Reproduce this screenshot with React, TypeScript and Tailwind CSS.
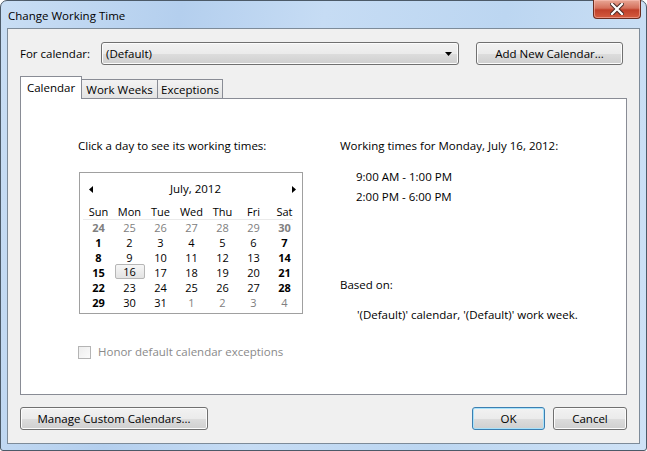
import React from 'react';

const font = { fontFamily: '"Segoe UI", "Open Sans", "Noto Sans", sans-serif' };

type Day = { n: number; muted?: boolean; bold?: boolean; selected?: boolean };

const weeks: Day[][] = [
  [
    { n: 24, muted: true, bold: true },
    { n: 25, muted: true },
    { n: 26, muted: true },
    { n: 27, muted: true },
    { n: 28, muted: true },
    { n: 29, muted: true },
    { n: 30, muted: true, bold: true },
  ],
  [1, 2, 3, 4, 5, 6, 7].map((n, i) => ({ n, bold: i === 0 || i === 6 })),
  [8, 9, 10, 11, 12, 13, 14].map((n, i) => ({ n, bold: i === 0 || i === 6 })),
  [15, 16, 17, 18, 19, 20, 21].map((n, i) => ({ n, bold: i === 0 || i === 6, selected: n === 16 })),
  [22, 23, 24, 25, 26, 27, 28].map((n, i) => ({ n, bold: i === 0 || i === 6 })),
  [
    { n: 29, bold: true },
    { n: 30 },
    { n: 31 },
    { n: 1, muted: true },
    { n: 2, muted: true },
    { n: 3, muted: true },
    { n: 4, muted: true },
  ],
];

const dayNames = ['Sun', 'Mon', 'Tue', 'Wed', 'Thu', 'Fri', 'Sat'];

const WinButton: React.FC<{ label: string; className?: string; isDefault?: boolean }> = ({
  label,
  className = '',
  isDefault,
}) => (
  <button
    className={`h-[23px] rounded-[3px] border text-[11.5px] text-black bg-[linear-gradient(to_bottom,#f2f2f2_0%,#ebebeb_50%,#dddddd_51%,#cfcfcf_100%)] ${
      isDefault ? 'border-[#3c7fb1] shadow-[inset_0_0_0_1px_#a8e2fb]' : 'border-[#707070] shadow-[inset_0_0_0_1px_#fcfcfc]'
    } ${className}`}
  >
    {label}
  </button>
);

const Calendar: React.FC = () => (
  <div className="w-[224px] h-[142px] border border-[#a0a0a0] bg-white pt-[8px] pl-[3px] text-[11px]">
    <div className="relative h-[16px] w-[217px] flex items-center justify-center leading-[16px] text-[11.5px]">
      <svg className="absolute left-[6px] top-[5px]" width="4" height="7" viewBox="0 0 4 7">
        <path d="M4 0 L0 3.5 L4 7 Z" fill="#000" />
      </svg>
      <span className="pl-[8px]">July, 2012</span>
      <svg className="absolute left-[209px] top-[5px]" width="4" height="7" viewBox="0 0 4 7">
        <path d="M0 0 L4 3.5 L0 7 Z" fill="#000" />
      </svg>
    </div>
    <div className="mt-[8px] grid grid-cols-[repeat(7,31px)] leading-[14px] h-[15px] border-b border-[#eaeaea] w-[210px] ml-[5px] -translate-x-[5px]">
      {dayNames.map((d) => (
        <div key={d} className="text-center">
          {d}
        </div>
      ))}
    </div>
    {weeks.map((w, wi) => (
      <div key={wi} className="grid grid-cols-[repeat(7,31px)] leading-[15px] h-[15px]">
        {w.map((d, di) => (
          <div key={di} className="flex justify-center">
            <span
              className={`text-center ${d.bold ? 'font-bold' : ''} ${
                d.muted ? 'text-[#808080]' : 'text-black'
              } ${
                d.selected
                  ? 'w-[30px] h-[15px] -mt-[1px] rounded-[2px] border border-[#b6b6b6] bg-[linear-gradient(to_bottom,#f6f6f6,#e3e3e3)] leading-[13px]'
                  : ''
              }`}
            >
              {d.n}
            </span>
          </div>
        ))}
      </div>
    ))}
  </div>
);

export default function App() {
  return (
    <div className="w-[647px] h-[451px] bg-white" style={font}>
      <div className="w-[647px] h-[451px] rounded-t-[7px] rounded-b-[3px] border border-[#4c5a68] bg-[linear-gradient(100deg,#c9def4_0%,#b4cfee_25%,#c6dcf4_45%,#bcd6f1_70%,#cfe2f6_100%)] flex flex-col">
        <div className="h-[27px] flex items-start justify-between">
          <div className="pl-[7px] pt-[7px] text-[11.5px] leading-[16px] text-black">Change Working Time</div>
          <div className="mr-[5px] -mt-[1px] w-[48px] h-[19px] rounded-b-[4px] border border-[#6b2c20] border-t-0 bg-[linear-gradient(to_bottom,#e8a796_0%,#d5705b_45%,#c0402a_55%,#d45b3f_100%)] shadow-[inset_0_0_0_1px_rgba(255,200,190,0.5)] flex items-center justify-center">
            <svg width="14" height="12" viewBox="0 0 14 12">
              <path d="M2 1 L12 11 M12 1 L2 11" stroke="#4a2a26" strokeWidth="4.2" strokeLinecap="square" />
              <path d="M2 1 L12 11 M12 1 L2 11" stroke="#ffffff" strokeWidth="2.2" strokeLinecap="square" />
            </svg>
          </div>
        </div>
        <div className="mx-[6px] h-[416px] border border-[#7d8b99] bg-[#f0f0f0] flex flex-col text-[11.5px] text-black">
          <div className="flex items-center mt-[13px] pl-[12px] h-[23px]">
            <span className="w-[81px] leading-[16px]">For calendar:</span>
            <div className="w-[358px] h-[23px] rounded-[3px] border border-[#707070] shadow-[inset_0_0_0_1px_#fcfcfc] bg-[linear-gradient(to_bottom,#f2f2f2_0%,#ebebeb_50%,#dddddd_51%,#cfcfcf_100%)] flex items-center justify-between pl-[4px] pr-[6px]">
              <span>(Default)</span>
              <svg width="7" height="4" viewBox="0 0 7 4">
                <path d="M0 0 L7 0 L3.5 4 Z" fill="#000" />
              </svg>
            </div>
            <WinButton label="Add New Calendar..." className="ml-[17px] w-[147px]" />
          </div>

          <div className="mt-[11px] ml-[12px] flex items-end h-[22px]">
            <div className="relative z-10 h-[23px] w-[62px] -mb-[1px] border border-b-0 border-[#898c95] bg-white flex items-start justify-center pt-[3px] leading-[16px]">
              Calendar
            </div>
            <div className="h-[19px] w-[76px] border border-l-0 border-b-0 border-[#898c95] bg-[linear-gradient(to_bottom,#f3f3f3,#e3e3e3)] flex items-center justify-center pt-[1px] leading-[16px]">
              Work Weeks
            </div>
            <div className="h-[19px] w-[65px] border border-l-0 border-b-0 border-[#898c95] bg-[linear-gradient(to_bottom,#f3f3f3,#e3e3e3)] flex items-center justify-center pt-[1px] leading-[16px]">
              Exceptions
            </div>
          </div>

          <div className="ml-[12px] w-[607px] h-[297px] border border-[#898c95] bg-white flex pt-[39px] pl-[57px]">
            <div className="w-[262px] flex flex-col">
              <div className="leading-[16px]">Click a day to see its working times:</div>
              <div className="mt-[18px] ml-[1px]">
                <Calendar />
              </div>
              <div className="mt-[30px] flex items-center h-[16px] text-[#8a8a8a]">
                <span className="w-[13px] h-[13px] border border-[#b4b4b4] bg-[linear-gradient(135deg,#ededed,#fbfbfb)]" />
                <span className="ml-[7px] leading-[16px]">Honor default calendar exceptions</span>
              </div>
            </div>
            <div className="flex flex-col">
              <div className="leading-[16px]">Working times for Monday, July 16, 2012:</div>
              <div className="mt-[13px] pl-[16px] leading-[20px]">
                <div>9:00 AM - 1:00 PM</div>
                <div>2:00 PM - 6:00 PM</div>
              </div>
              <div className="mt-[70px] leading-[16px]">Based on:</div>
              <div className="mt-[14px] pl-[17px] leading-[16px]">'(Default)' calendar, '(Default)' work week.</div>
            </div>
          </div>

          <div className="mt-[12px] ml-[12px] flex items-center w-[607px]">
            <WinButton label="Manage Custom Calendars..." className="w-[188px]" />
            <WinButton label="OK" isDefault className="ml-auto w-[73px]" />
            <WinButton label="Cancel" className="ml-[8px] w-[74px]" />
          </div>
        </div>
      </div>
    </div>
  );
}
